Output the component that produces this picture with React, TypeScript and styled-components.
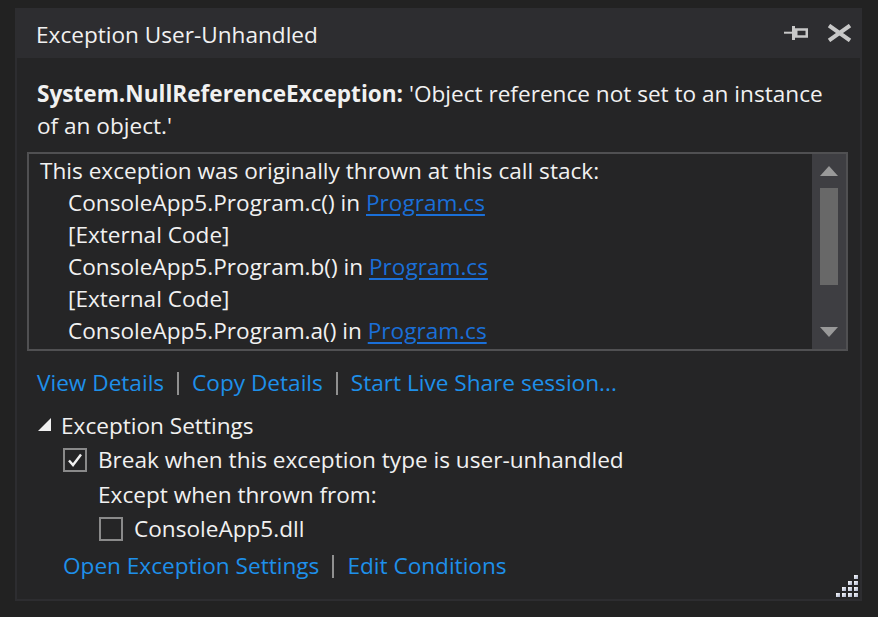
import React from 'react';
import styled, { createGlobalStyle } from 'styled-components';

const GlobalStyle = createGlobalStyle`
  html, body {
    margin: 0;
    background: #222222;
  }
  body {
    font-family: 'Open Sans', 'Noto Sans', sans-serif;
    color: #f1f1f1;
  }
`;

const Page = styled.div`
  padding: 8px 0 0 15px;
  height: 617px;
  box-sizing: border-box;
`;

const Panel = styled.div`
  position: relative;
  width: 847px;
  height: 593px;
  background: #2d2d30;
  padding: 0 2px 2px 2px;
  box-sizing: border-box;
  display: flex;
  flex-direction: column;
`;

const Header = styled.div`
  height: 50px;
  flex-shrink: 0;
  display: flex;
  align-items: center;
  padding: 3px 8px 0 19px;
  box-sizing: border-box;
`;

const Title = styled.div`
  flex: 1;
  font-size: 22.6px;
  color: #f1f1f1;
`;

const HeaderIcons = styled.div`
  display: flex;
  align-items: center;
  gap: 18px;
  margin-top: -3px;
`;

const Body = styled.div`
  flex: 1;
  background: #252526;
  padding: 20px 12px 0 10px;
  display: flex;
  flex-direction: column;
  font-size: 22.6px;
`;

const Message = styled.div`
  line-height: 32px;
  padding-left: 10px;
  b {
    font-weight: 700;
  }
`;

const StackBox = styled.div`
  margin-top: 10px;
  height: 199px;
  border: 2px solid #505052;
  box-sizing: border-box;
  display: flex;
`;

const StackLines = styled.div`
  flex: 1;
  padding: 1px 0 0 11px;
  line-height: 32px;
  white-space: nowrap;
  overflow: hidden;
`;

const StackLine = styled.div<{ $indent?: boolean }>`
  padding-left: ${p => (p.$indent ? 28 : 0)}px;
`;

const FileLink = styled.a`
  color: #1a6fd8;
  text-decoration: underline;
  text-underline-offset: 3px;
`;

const Scrollbar = styled.div`
  width: 34px;
  background: #3e3e42;
  display: flex;
  flex-direction: column;
  align-items: center;
  padding: 12px 0;
  box-sizing: border-box;
`;

const Arrow = styled.div<{ $down?: boolean }>`
  width: 0;
  height: 0;
  border-left: 9px solid transparent;
  border-right: 9px solid transparent;
  ${p => (p.$down ? 'border-top: 10px solid #999999;' : 'border-bottom: 10px solid #999999;')}
`;

const Thumb = styled.div`
  width: 18px;
  height: 97px;
  margin-top: 12px;
  background: #686868;
`;

const Spacer = styled.div`
  flex: 1;
`;

const Row = styled.div<{ $indent: number; $gap?: number }>`
  display: flex;
  align-items: center;
  height: 34px;
  line-height: 34px;
  padding-left: ${p => p.$indent}px;
  margin-top: ${p => p.$gap ?? 0}px;
  white-space: nowrap;
`;

const ActionLink = styled.a`
  color: #1e90ea;
  text-decoration: none;
`;

const Separator = styled.span`
  width: 2px;
  height: 23px;
  background: #909090;
  margin: 0 13px;
`;

const Expander = styled.span`
  width: 0;
  height: 0;
  border-left: 13px solid transparent;
  border-bottom: 13px solid #f1f1f1;
  margin: 0 10px 3px 0;
`;

const Check = styled.span`
  width: 24px;
  height: 24px;
  box-sizing: border-box;
  border: 2px solid #8a8a8a;
  margin-right: 11px;
  display: flex;
  align-items: center;
  justify-content: center;
`;

const Grip = styled.svg`
  position: absolute;
  right: 4px;
  bottom: 4px;
`;

const PinIcon = () => (
  <svg width="25" height="14" viewBox="0 0 25 14">
    <rect x="0" y="5.7" width="8" height="2" fill="#c8c8c8" />
    <rect x="8" y="0" width="3" height="14" fill="#c8c8c8" />
    <rect x="12.25" y="3.5" width="10.5" height="7" fill="none" stroke="#c8c8c8" strokeWidth="2.5" />
  </svg>
);

const CloseIcon = () => (
  <svg width="25" height="18" viewBox="0 0 25 18">
    <path d="M2 1.5 L23 16.5 M23 1.5 L2 16.5" stroke="#c8c8c8" strokeWidth="4" />
  </svg>
);

const CheckMark = () => (
  <svg width="16" height="16" viewBox="0 0 16 16">
    <path d="M2 8.5 L6 13 L14 2.5" fill="none" stroke="#f1f1f1" strokeWidth="2.4" />
  </svg>
);

const gripCells: Array<[number, number]> = [
  [18, 0],
  [12, 6], [18, 6],
  [6, 12], [12, 12], [18, 12],
  [0, 18], [6, 18], [12, 18], [18, 18],
];

const stack: Array<{ text: string; file?: string }> = [
  { text: 'ConsoleApp5.Program.c() in ', file: 'Program.cs' },
  { text: '[External Code]' },
  { text: 'ConsoleApp5.Program.b() in ', file: 'Program.cs' },
  { text: '[External Code]' },
  { text: 'ConsoleApp5.Program.a() in ', file: 'Program.cs' },
];

export default function App() {
  return (
    <>
      <GlobalStyle />
      <Page>
        <Panel>
          <Header>
            <Title>Exception User-Unhandled</Title>
            <HeaderIcons>
              <PinIcon />
              <CloseIcon />
            </HeaderIcons>
          </Header>
          <Body>
            <Message>
              <b>System.NullReferenceException:</b> 'Object reference not set to an instance
              <br />
              of an object.'
            </Message>
            <StackBox>
              <StackLines>
                <StackLine>This exception was originally thrown at this call stack:</StackLine>
                {stack.map((s, i) => (
                  <StackLine key={i} $indent>
                    {s.text}
                    {s.file && <FileLink href="#">{s.file}</FileLink>}
                  </StackLine>
                ))}
              </StackLines>
              <Scrollbar>
                <Arrow />
                <Thumb />
                <Spacer />
                <Arrow $down />
              </Scrollbar>
            </StackBox>
            <Row $indent={10} $gap={15}>
              <ActionLink href="#">View Details</ActionLink>
              <Separator />
              <ActionLink href="#">Copy Details</ActionLink>
              <Separator />
              <ActionLink href="#">Start Live Share session...</ActionLink>
            </Row>
            <Row $indent={11} $gap={9}>
              <Expander />
              Exception Settings
            </Row>
            <Row $indent={36}>
              <Check>
                <CheckMark />
              </Check>
              Break when this exception type is user-unhandled
            </Row>
            <Row $indent={71} $gap={1}>
              Except when thrown from:
            </Row>
            <Row $indent={72}>
              <Check />
              ConsoleApp5.dll
            </Row>
            <Row $indent={36} $gap={3}>
              <ActionLink href="#">Open Exception Settings</ActionLink>
              <Separator />
              <ActionLink href="#">Edit Conditions</ActionLink>
            </Row>
          </Body>
          <Grip width="22" height="22" viewBox="0 0 22 22">
            <defs>
              <linearGradient id="gripFill" x1="0" y1="0" x2="1" y2="1">
                <stop offset="0" stopColor="#ffffff" />
                <stop offset="1" stopColor="#a8b0c8" />
              </linearGradient>
            </defs>
            {gripCells.map(([x, y], i) => (
              <rect key={i} x={x} y={y} width="4" height="4" fill="url(#gripFill)" />
            ))}
          </Grip>
        </Panel>
      </Page>
    </>
  );
}
